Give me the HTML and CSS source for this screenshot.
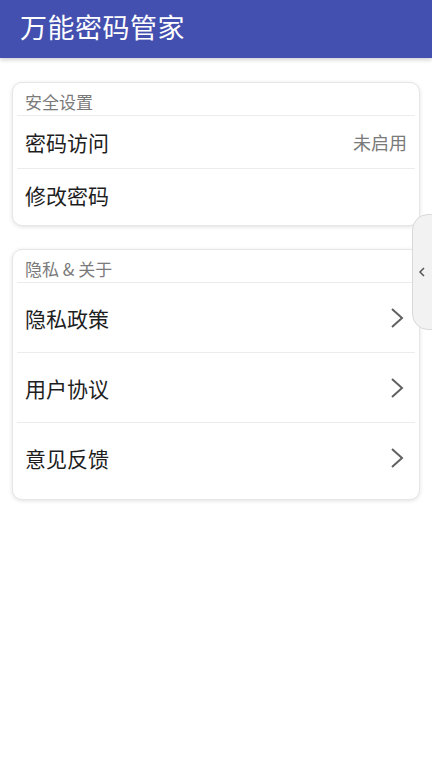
FILE: index.html
```html
<!DOCTYPE html>
<html lang="zh-CN">
<head>
  <meta charset="UTF-8" />
  <meta name="viewport" content="width=device-width, initial-scale=1.0"/>
  <title>万能密码管家</title>
  <link rel="stylesheet" href="styles.css">
</head>
<body>

  <header class="topbar">
    <h1>万能密码管家</h1>
  </header>

  <main class="content">
    <!-- 安全设置 -->
    <section class="card card-security">
      <div class="card-title">安全设置</div>
      <div class="row">
        <span class="row-label">密码访问</span>
        <span class="row-value">未启用</span>
      </div>
      <div class="row">
        <span class="row-label">修改密码</span>
      </div>
    </section>

    <!-- 隐私 & 关于 -->
    <section class="card card-about">
      <div class="card-title">隐私 &amp; 关于</div>
      <div class="row tall">
        <span class="row-label">隐私政策</span>
        <svg class="chevron" viewBox="0 0 14 22"><path d="M2 2 L12 11 L2 20" /></svg>
      </div>
      <div class="row tall">
        <span class="row-label">用户协议</span>
        <svg class="chevron" viewBox="0 0 14 22"><path d="M2 2 L12 11 L2 20" /></svg>
      </div>
      <div class="row tall">
        <span class="row-label">意见反馈</span>
        <svg class="chevron" viewBox="0 0 14 22"><path d="M2 2 L12 11 L2 20" /></svg>
      </div>
    </section>
  </main>

  <!-- 侧边悬浮把手 -->
  <div class="side-handle">
    <svg viewBox="0 0 8 12"><path d="M6 2 L2 6 L6 10" /></svg>
  </div>

</body>
</html>
```

FILE: styles.css
```css
:root {
  --indigo: #4350af;
  --texto: #1e1e1e;
  --cinza: #7a7a7a;
  --linha: #ececec;
  --branco: #ffffff;
}

body {
  margin: 0;
  padding: 0;
  background-color: var(--branco);
  font-family: "Noto Sans CJK SC", "Noto Sans", sans-serif;
  color: var(--texto);
  min-height: 100vh;
}

.topbar {
  background-color: var(--indigo);
  height: 58px;
  padding: 0 20px;
  display: flex;
  align-items: center;
  box-shadow: 0 2px 4px rgba(0, 0, 0, 0.18);
}

.topbar h1 {
  margin: 0;
  margin-top: -6px;
  font-size: 27px;
  font-weight: 400;
  color: #fff;
  letter-spacing: 0.5px;
}

.content {
  padding: 24px 12px;
  display: flex;
  flex-direction: column;
  gap: 23px;
}

.card {
  border: 1px solid #e6e6e6;
  border-radius: 10px;
  box-shadow: 0 1px 4px rgba(0, 0, 0, 0.12);
  padding: 0 4px 4px;
  background: var(--branco);
}

.card-about {
  padding-bottom: 7px;
}

.card-title {
  height: 32px;
  line-height: 38px;
  padding: 0 8px;
  font-size: 17px;
  color: var(--cinza);
  border-bottom: 1px solid var(--linha);
  overflow: hidden;
}

.row {
  height: 52px;
  display: flex;
  align-items: center;
  justify-content: space-between;
  padding: 0 8px;
  border-bottom: 1px solid var(--linha);
}

.row:last-child {
  border-bottom: none;
}

.row.tall {
  height: 69px;
}

.row-label {
  font-size: 21px;
}

.row-value {
  font-size: 18px;
  color: var(--cinza);
}

.chevron {
  width: 14px;
  height: 22px;
  margin-right: 3px;
}

.chevron path {
  fill: none;
  stroke: #606060;
  stroke-width: 2;
}

.side-handle {
  position: fixed;
  top: 214px;
  right: -20px;
  width: 40px;
  height: 116px;
  background: #f2f2f2;
  border: 1px solid #d9d9d9;
  border-radius: 16px;
  display: flex;
  align-items: center;
  padding-left: 5px;
  box-sizing: border-box;
}

.side-handle svg {
  width: 8px;
  height: 12px;
}

.side-handle path {
  fill: none;
  stroke: #555;
  stroke-width: 1.5;
}
```
